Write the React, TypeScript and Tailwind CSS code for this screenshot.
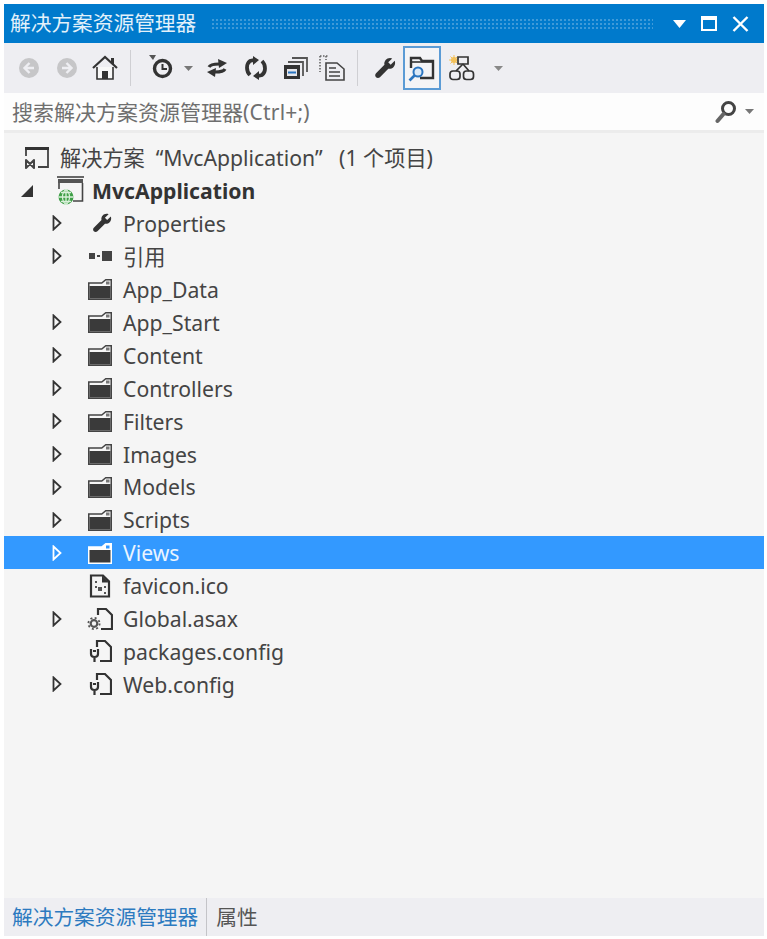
import type { ReactNode } from 'react';

const FONT = "font-['Noto_Sans','Noto_Sans_CJK_SC',sans-serif]";

type Kind = 'folder' | 'wrench' | 'refs' | 'ico' | 'asax' | 'config';
type Row = { label: string; icon: Kind; arrow?: boolean; selected?: boolean };

const ROWS: Row[] = [
  { label: 'Properties', icon: 'wrench', arrow: true },
  { label: '引用', icon: 'refs', arrow: true },
  { label: 'App_Data', icon: 'folder' },
  { label: 'App_Start', icon: 'folder', arrow: true },
  { label: 'Content', icon: 'folder', arrow: true },
  { label: 'Controllers', icon: 'folder', arrow: true },
  { label: 'Filters', icon: 'folder', arrow: true },
  { label: 'Images', icon: 'folder', arrow: true },
  { label: 'Models', icon: 'folder', arrow: true },
  { label: 'Scripts', icon: 'folder', arrow: true },
  { label: 'Views', icon: 'folder', arrow: true, selected: true },
  { label: 'favicon.ico', icon: 'ico' },
  { label: 'Global.asax', icon: 'asax', arrow: true },
  { label: 'packages.config', icon: 'config' },
  { label: 'Web.config', icon: 'config', arrow: true },
];

function Svg({ w = 26, h = 26, children }: { w?: number; h?: number; children: ReactNode }) {
  return (
    <svg width={w} height={h} viewBox={`0 0 ${w} ${h}`} fill="none">
      {children}
    </svg>
  );
}

function Caret({ color = '#777' }: { color?: string }) {
  return (
    <svg width="9" height="5" viewBox="0 0 9 5">
      <path d="M0 0h9L4.500 5z" fill={color} />
    </svg>
  );
}

function Circle({ dir }: { dir: 'l' | 'r' }) {
  return (
    <Svg w={22} h={22}>
      <circle cx="11" cy="11" r="10" fill="#c6c6c8" />
      <path
        d={dir === 'l' ? 'M11.500 6 6.500 11l5 5M7 11h9' : 'M10.500 6l5 5-5 5M15 11H6'}
        stroke="#eeeef2"
        strokeWidth="2.400"
      />
    </Svg>
  );
}

function Home() {
  return (
    <Svg w={26} h={26}>
      <path d="M1 13 13 2l12 11" stroke="#333" strokeWidth="2.200" />
      <path d="M5 12v12h16V12" stroke="#333" strokeWidth="1.600" fill="#f8f8f8" />
      <path d="M10 24v-8h6v8z" fill="#333" />
      <path d="M19 3h3v6h-3z" fill="#333" />
    </Svg>
  );
}

function History() {
  return (
    <Svg w={26} h={26}>
      <path d="M0 0h7L4 5z" fill="#555" />
      <circle cx="13.500" cy="13.500" r="8" stroke="#333" strokeWidth="3.400" />
      <path d="M13.500 9v5h4.500" stroke="#333" strokeWidth="2" />
    </Svg>
  );
}

function Sync() {
  return (
    <Svg w={22} h={20}>
      <path d="M3 9c1-2 5-3 10-3" stroke="#333" strokeWidth="3.200" />
      <path d="M12 1l9 4-8 5z" fill="#333" />
      <path d="M19 11c-1 2-5 3-10 3" stroke="#333" strokeWidth="3.200" />
      <path d="M10 10l-9 4 8 5z" fill="#333" />
    </Svg>
  );
}

function Refresh() {
  return (
    <Svg w={22} h={24}>
      <path d="M5 19C1 15 1 8 5 5l4-1" stroke="#333" strokeWidth="3.800" />
      <path d="M17 5c4 4 4 11 0 14l-4 1" stroke="#333" strokeWidth="3.800" />
      <path d="M8 0l6 4-6 5zM14 15v9l-6-4z" fill="#333" />
    </Svg>
  );
}

function Collapse() {
  return (
    <Svg w={24} h={24}>
      <path d="M8 2h15v14M4 6h15v14" stroke="#555" strokeWidth="1.800" />
      <path d="M0 9h16v14H0z" fill="#333" />
      <path d="M3 13h10v7H3z" fill="#e6e6ea" />
      <path d="M4 15.500h8v2H4z" fill="#2a75c0" />
    </Svg>
  );
}

function ShowAll() {
  return (
    <Svg w={26} h={28}>
      <path d="M1 2h8M1 2v16M7 2v4" stroke="#666" strokeWidth="1.600" strokeDasharray="1.500 1.500" />
      <path d="M7 9h11l7 6v11H7z" stroke="#444" strokeWidth="1.600" fill="#eeeef2" />
      <path d="M10 14h7M10 18h11M10 22h11" stroke="#444" strokeWidth="1.500" />
    </Svg>
  );
}

function Wrench({ size = 24, color = '#333' }: { size?: number; color?: string }) {
  return (
    <svg width={size} height={size} viewBox="0 0 24 24">
      <path
        d="M23 6.500c0 4-3.400 7-7.400 6.300L6.500 22c-1.200 1.200-3.200 1.200-4.300 0-1.200-1.200-1.200-3.100 0-4.300l9.200-9.200C10.600 4.600 13.600 1 17.500 1c.9 0 1.700.2 2.400.5L15.500 5.800l2.700 2.700 4.400-4.300c.3.700.4 1.500.4 2.300z"
        fill={color}
      />
    </svg>
  );
}

function FolderSearch() {
  return (
    <Svg w={28} h={28}>
      <path d="M3 14V4h9l2 3h11v17H12" stroke="#333" strokeWidth="2.400" fill="none" />
      <path d="M4 8h20" stroke="#333" strokeWidth="1.600" />
      <circle cx="10" cy="18" r="4.500" stroke="#2a75c0" strokeWidth="2" fill="#dbe9f7" />
      <path d="M6.500 21.500 1.500 26.500" stroke="#2a75c0" strokeWidth="2.600" />
    </Svg>
  );
}

function Schema() {
  return (
    <Svg w={26} h={26}>
      <circle cx="5" cy="5" r="3" fill="#f3c15a" />
      <path d="M5 0v10M0 5h10M1.500 1.500l7 7M8.500 1.500l-7 7" stroke="#f3c15a" strokeWidth="1" />
      <path d="M9 2h10v7H9z" stroke="#333" strokeWidth="1.700" fill="#eeeef2" />
      <path d="M14 9l-7 7M14 9l6 7" stroke="#333" strokeWidth="1.700" />
      <rect x="1" y="16" width="10" height="8.500" rx="3" stroke="#333" strokeWidth="1.700" />
      <rect x="14.500" y="16" width="10" height="8.500" rx="3" stroke="#333" strokeWidth="1.700" />
    </Svg>
  );
}

function Glass() {
  return (
    <Svg w={22} h={24}>
      <circle cx="13.500" cy="8.500" r="6" stroke="#444" strokeWidth="3" />
      <path d="M8.500 14 2.500 21" stroke="#666" strokeWidth="4" strokeLinecap="round" />
    </Svg>
  );
}

function SolutionIcon() {
  return (
    <Svg w={26} h={24}>
      <path d="M2 10V2h22v19H14" stroke="#444" strokeWidth="1.800" />
      <path d="M1 2.500h24" stroke="#333" strokeWidth="3" />
      <path d="M2 14l8 8v-8L2 22z" stroke="#444" strokeWidth="2" strokeLinejoin="round" />
    </Svg>
  );
}

function ProjectIcon() {
  return (
    <Svg w={28} h={30}>
      <path d="M1 1h27" stroke="#444" strokeWidth="1.600" />
      <path d="M2 3h25v4H2z" fill="#555" />
      <path d="M26.500 7v18H17M3 7v6" stroke="#444" strokeWidth="1.600" />
      <circle cx="10" cy="21" r="7.500" fill="#3f9f47" />
      <path d="M10 13.500v15M2.500 21h15M5 16.500h10M5 25.500h10" stroke="#d9f0da" strokeWidth="1.300" />
      <path d="M6.500 21c0-3 1.500-6 3.500-7.500 2 1.500 3.500 4.500 3.500 7.500s-1.500 6-3.500 7.500c-2-1.500-3.500-4.500-3.500-7.500z" stroke="#d9f0da" strokeWidth="1.200" />
    </Svg>
  );
}

function Folder({ selected }: { selected?: boolean }) {
  const edge = selected ? '#fff' : '#444';
  return (
    <Svg w={24} h={22}>
      <path d="M.75 7V5h13l4-3.250h5.500V21.250H.75z" fill={selected ? '#fff' : '#f5f5f5'} stroke={edge} strokeWidth="1.500" />
      <path d="M1.500 8h21v12.500h-21z" fill="#3a3a3a" />
      <path d="M18 3.500h3.500v3H18z" fill={selected ? '#3399ff' : '#777'} />
    </Svg>
  );
}

function FileShape() {
  return <path d="M9 8V2h8l6 6v14H12" stroke="#333" strokeWidth="2.200" fill="none" />;
}

function ConfigIcon() {
  return (
    <Svg w={24} h={24}>
      <FileShape />
      <path d="M3 10v5c0 2 1.500 3 3.500 3S10 17 10 15v-5M6.500 18v5" stroke="#333" strokeWidth="2.200" />
      <path d="M5 12h3" stroke="#333" strokeWidth="2" />
    </Svg>
  );
}

function AsaxIcon() {
  return (
    <Svg w={26} h={24}>
      <path d="M11 8V2h8l6 6v14H14" stroke="#333" strokeWidth="2.200" fill="none" />
      <circle cx="7" cy="16.500" r="3.300" stroke="#555" strokeWidth="2.200" />
      <circle cx="7" cy="16.500" r="5.600" stroke="#555" strokeWidth="1.800" strokeDasharray="2 2.400" />
    </Svg>
  );
}

function IcoIcon() {
  return (
    <Svg w={22} h={24}>
      <path d="M2 1.500h12l6 6v15H2z" stroke="#333" strokeWidth="2.200" fill="#f5f5f5" />
      <path d="M13 1.500v7h7" fill="#333" />
      <path d="M6 7h2v2H6zM6 12h2v2H6zM9 13h4v4H9zM15 12h2v2h-2zM15 18h2v2h-2z" fill="#555" />
    </Svg>
  );
}

function Refs() {
  return (
    <Svg w={25} h={12}>
      <path d="M1 3h6v6H1zM9 5h3v2H9zM14 1h10v10H14z" fill="#444" />
    </Svg>
  );
}

function ItemIcon({ kind, selected }: { kind: Kind; selected?: boolean }) {
  if (kind === 'folder') return <Folder selected={selected} />;
  if (kind === 'wrench') return <div className="ml-1"><Wrench size={20} /></div>;
  if (kind === 'refs') return <Refs />;
  if (kind === 'ico') return <IcoIcon />;
  if (kind === 'asax') return <AsaxIcon />;
  return <ConfigIcon />;
}

function Arrow({ selected }: { selected?: boolean }) {
  return (
    <svg width="10" height="16" viewBox="0 0 10 16">
      <path d="M1.500 1.500 8.500 8l-7 6.500z" fill="none" stroke={selected ? '#fff' : '#333'} strokeWidth="1.800" />
    </svg>
  );
}

function ToolBtn({ children, className = 'w-[38px]' }: { children: ReactNode; className?: string }) {
  return <div className={`flex h-[44px] shrink-0 items-center justify-center ${className}`}>{children}</div>;
}

function Sep() {
  return <div className="mx-[6px] h-[36px] w-px shrink-0 bg-[#cfcfd3]" />;
}

export default function App() {
  return (
    <div className={`${FONT} min-h-[939px] w-[767px] bg-white pt-1 pl-1 pr-[3px] pb-[3px]`}>
      <div className="flex h-[932px] flex-col bg-[#f5f5f5]">
        {/* title bar */}
        <div className="flex h-[39px] shrink-0 items-center bg-[#007acc] pl-[6px] pr-[15px]">
          <span className="text-[20.700px] leading-none text-[#e3f1fa]">解决方案资源管理器</span>
          <div className="ml-[15px] mr-[20px] h-[11px] flex-1 bg-[radial-gradient(circle,#3f9ad8_1px,transparent_1.200px)] bg-[length:4px_4px]" />
          <div className="flex items-center gap-[15px]">
            <svg width="13" height="8" viewBox="0 0 13 8">
              <path d="M0 0h13L6.500 8z" fill="#fff" />
            </svg>
            <div className="h-[15px] w-[16px] border-2 border-t-[4px] border-white" />
            <svg width="17" height="16" viewBox="0 0 17 16">
              <path d="M1.500 1 15.500 15M15.500 1 1.500 15" stroke="#fff" strokeWidth="2.400" />
            </svg>
          </div>
        </div>

        {/* toolbar */}
        <div className="flex h-[50px] shrink-0 items-center bg-[#eeeef2] pl-[6px]">
          <ToolBtn><Circle dir="l" /></ToolBtn>
          <ToolBtn><Circle dir="r" /></ToolBtn>
          <ToolBtn><Home /></ToolBtn>
          <Sep />
          <ToolBtn className="ml-[8px] w-[34px]"><History /></ToolBtn>
          <ToolBtn className="ml-[3px] w-[12px]"><Caret /></ToolBtn>
          <ToolBtn className="ml-[4px] w-[38px]"><Sync /></ToolBtn>
          <ToolBtn className="ml-[1px] w-[38px]"><Refresh /></ToolBtn>
          <ToolBtn className="ml-[2px] w-[38px]"><Collapse /></ToolBtn>
          <ToolBtn className="-ml-[2px] w-[38px]"><ShowAll /></ToolBtn>
          <Sep />
          <ToolBtn className="ml-[5px] w-[32px]"><Wrench size={22} /></ToolBtn>
          <ToolBtn className="ml-[2px] w-[38px] border-2 border-[#5b9bd5] bg-[#f4f4f6]"><FolderSearch /></ToolBtn>
          <ToolBtn className="w-[42px]"><Schema /></ToolBtn>
          <ToolBtn className="ml-[1px] w-[28px]"><Caret color="#888" /></ToolBtn>
        </div>

        {/* search */}
        <div className="flex h-[40px] shrink-0 items-center justify-between border-b-[3px] border-[#ececec] bg-[#fdfdfd] pl-2 pr-[10px]">
          <span className="pt-[2px] text-[21px] leading-none text-[#6f6f6f]">
            搜索解决方案资源管理器<span className="tracking-[0.200px]">(Ctrl+;)</span>
          </span>
          <div className="flex items-center gap-[8px]">
            <Glass />
            <Caret color="#777" />
          </div>
        </div>

        {/* tree */}
        <div className="flex-1 pt-[8px] text-[21.200px] text-[#444]">
          <div className="flex h-[33px] items-center pl-[20px]">
            <div className="w-[36px] shrink-0"><SolutionIcon /></div>
            <span className="whitespace-pre">解决方案  “MvcApplication”   (1 个项目)</span>
          </div>
          <div className="flex h-[33px] items-center">
            <div className="flex w-[46px] shrink-0 justify-end pr-[17px]">
              <svg width="12" height="12" viewBox="0 0 12 12">
                <path d="M12 0v12H0z" fill="#333" />
              </svg>
            </div>
            <div className="w-[42px] shrink-0 pl-[6px]"><ProjectIcon /></div>
            <span className="font-bold text-[#333]">MvcApplication</span>
          </div>
          {ROWS.map((r) => (
            <div
              key={r.label}
              className={`flex h-[32.930px] items-center ${r.selected ? 'bg-[#3399ff] text-[#eaf4ff]' : ''}`}
            >
              <div className="flex w-[78px] shrink-0 justify-end pr-[20px]">
                {r.arrow && <Arrow selected={r.selected} />}
              </div>
              <div className="mr-[5px] flex w-[36px] shrink-0 justify-center">
                <ItemIcon kind={r.icon} selected={r.selected} />
              </div>
              <span className="pt-px">{r.label}</span>
            </div>
          ))}
        </div>

        {/* bottom tabs */}
        <div className="flex h-[38px] shrink-0 items-center bg-[#eeeef2] text-[20.700px] leading-none">
          <span className="pl-2 pr-[8px] text-[#2c7ac0]">解决方案资源管理器</span>
          <div className="h-full w-px bg-[#c4c4c8]" />
          <span className="pl-[9px] text-[#555]">属性</span>
        </div>
      </div>
    </div>
  );
}
